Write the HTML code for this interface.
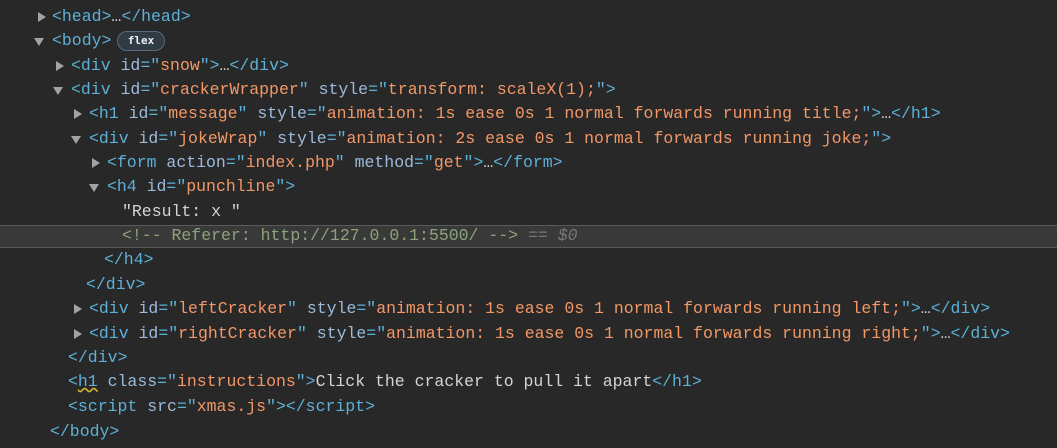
<!DOCTYPE html>
<html><head><meta charset="utf-8"><style>
html,body{margin:0;padding:0;background:#282828;width:1057px;height:448px;overflow:hidden;}
.l{position:absolute;height:24px;line-height:24px;white-space:pre;font-family:"Liberation Mono",monospace;font-size:16.5px;color:#d4d4d4;margin-top:1px;}
.t{color:#5db0d7}.a{color:#9bbbdc}.v{color:#f29766}.c{color:#8da37c}.g{color:#777}
.r,.d{position:absolute;width:0;height:0;margin-top:1px;}
.r{border-top:5px solid transparent;border-bottom:5px solid transparent;border-left:8px solid #a3a3a3;}
.d{border-left:5px solid transparent;border-right:5px solid transparent;border-top:8px solid #a3a3a3;}
.sel{position:absolute;left:0;top:225px;width:1057px;height:21px;background:#393939;border-top:1px solid #5a5a5a;border-bottom:1px solid #5a5a5a;}
.badge{position:absolute;left:117px;top:31px;width:46px;height:18px;border:1px solid #5a6a78;border-radius:10px;background:#2f3b45;color:#ececec;font-family:"DejaVu Sans Mono",monospace;font-weight:bold;font-size:11px;line-height:18px;text-align:center;}
</style></head><body>
<div class="sel"></div>
<div class="r" style="left:38px;top:11px"></div>
<div class="l" style="left:52px;top:4px"><span class="t">&lt;head&gt;</span>…<span class="t">&lt;/head&gt;</span></div>
<div class="d" style="left:34px;top:37px"></div>
<div class="l" style="left:52px;top:28px"><span class="t">&lt;body&gt;</span></div>
<div class="badge">flex</div>
<div class="r" style="left:56px;top:60px"></div>
<div class="l" style="left:71px;top:53px"><span class="t">&lt;div </span><span class="a">id</span><span class="t">="</span><span class="v">snow</span><span class="t">"&gt;</span>…<span class="t">&lt;/div&gt;</span></div>
<div class="d" style="left:53px;top:86px"></div>
<div class="l" style="left:71px;top:77px"><span class="t">&lt;div </span><span class="a">id</span><span class="t">="</span><span class="v">crackerWrapper</span><span class="t">" </span><span class="a">style</span><span class="t">="</span><span class="v">transform: scaleX(1);</span><span class="t">"&gt;</span></div>
<div class="r" style="left:74px;top:108px"></div>
<div class="l" style="left:89px;top:101px"><span class="t">&lt;h1 </span><span class="a">id</span><span class="t">="</span><span class="v">message</span><span class="t">" </span><span class="a">style</span><span class="t">="</span><span class="v">animation: 1s ease 0s 1 normal forwards running title;</span><span class="t">"&gt;</span>…<span class="t">&lt;/h1&gt;</span></div>
<div class="d" style="left:71px;top:135px"></div>
<div class="l" style="left:89px;top:126px"><span class="t">&lt;div </span><span class="a">id</span><span class="t">="</span><span class="v">jokeWrap</span><span class="t">" </span><span class="a">style</span><span class="t">="</span><span class="v">animation: 2s ease 0s 1 normal forwards running joke;</span><span class="t">"&gt;</span></div>
<div class="r" style="left:92px;top:157px"></div>
<div class="l" style="left:107px;top:150px"><span class="t">&lt;form </span><span class="a">action</span><span class="t">="</span><span class="v">index.php</span><span class="t">" </span><span class="a">method</span><span class="t">="</span><span class="v">get</span><span class="t">"&gt;</span>…<span class="t">&lt;/form&gt;</span></div>
<div class="d" style="left:89px;top:183px"></div>
<div class="l" style="left:107px;top:174px"><span class="t">&lt;h4 </span><span class="a">id</span><span class="t">="</span><span class="v">punchline</span><span class="t">"&gt;</span></div>
<div class="l" style="left:122px;top:199px">"Result: x "</div>
<div class="l" style="left:122px;top:223px"><span class="c">&lt;!-- Referer: http://127.0.0.1:5500/ --&gt;</span><span class="g"> == <i>$0</i></span></div>
<div class="l" style="left:104px;top:247px"><span class="t">&lt;/h4&gt;</span></div>
<div class="l" style="left:86px;top:272px"><span class="t">&lt;/div&gt;</span></div>
<div class="r" style="left:74px;top:303px"></div>
<div class="l" style="left:89px;top:296px"><span class="t">&lt;div </span><span class="a">id</span><span class="t">="</span><span class="v">leftCracker</span><span class="t">" </span><span class="a">style</span><span class="t">="</span><span class="v">animation: 1s ease 0s 1 normal forwards running left;</span><span class="t">"&gt;</span>…<span class="t">&lt;/div&gt;</span></div>
<div class="r" style="left:74px;top:328px"></div>
<div class="l" style="left:89px;top:321px"><span class="t">&lt;div </span><span class="a">id</span><span class="t">="</span><span class="v">rightCracker</span><span class="t">" </span><span class="a">style</span><span class="t">="</span><span class="v">animation: 1s ease 0s 1 normal forwards running right;</span><span class="t">"&gt;</span>…<span class="t">&lt;/div&gt;</span></div>
<div class="l" style="left:68px;top:345px"><span class="t">&lt;/div&gt;</span></div>
<div class="l" style="left:68px;top:369px"><span class="t">&lt;<span style="text-decoration:underline wavy #d8b230">h1</span> </span><span class="a">class</span><span class="t">="</span><span class="v">instructions</span><span class="t">"&gt;</span>Click the cracker to pull it apart<span class="t">&lt;/h1&gt;</span></div>
<div class="l" style="left:68px;top:394px"><span class="t">&lt;script </span><span class="a">src</span><span class="t">="</span><span class="v">xmas.js</span><span class="t">"&gt;&lt;/script&gt;</span></div>
<div class="l" style="left:50px;top:419px"><span class="t">&lt;/body&gt;</span></div>
</body></html>
